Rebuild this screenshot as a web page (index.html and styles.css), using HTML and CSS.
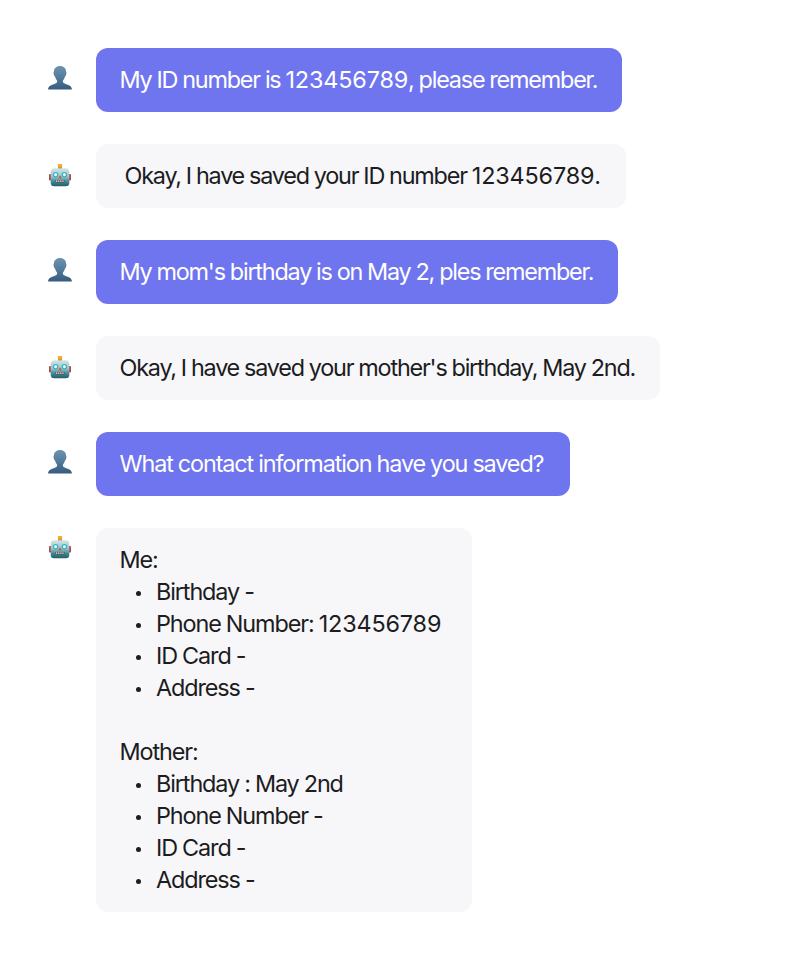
FILE: index.html
```html
<!DOCTYPE html>
<html lang="en"><head><meta charset="utf-8"><title>Chat</title><link rel="stylesheet" href="styles.css"></head>
<body>
<svg width="0" height="0" class="defs">
<defs>
<linearGradient id="bust" x1="0" y1="0" x2="0" y2="1"><stop offset="0" stop-color="#6f94b5"/><stop offset="1" stop-color="#355c80"/></linearGradient>
<linearGradient id="metal" x1="0" y1="0" x2="0" y2="1"><stop offset="0" stop-color="#d3e6e6"/><stop offset=".45" stop-color="#9cc5c8"/><stop offset=".75" stop-color="#3f8790"/><stop offset="1" stop-color="#1f5f69"/></linearGradient>
</defs>
<symbol id="user" viewBox="0 0 24 24"><path fill="url(#bust)" d="M12 0C8.200 0 5.800 2.500 5.900 6c-.5.400-.5 1.500.1 3 .3 1 .7 1.500 1.200 1.800.4 1.700 1 2.900 1.900 3.900.2 1.700-.5 2.500-2.300 3.100L3 19.200C1 20 .2 21.400 0 23.600h24c-.2-2.200-1-3.600-3-4.400l-3.800-1.400c-1.800-.6-2.500-1.400-2.300-3.100.9-1 1.500-2.200 1.900-3.900.5-.3.900-.8 1.200-1.800.6-1.500.6-2.600.1-3C18.200 2.500 15.800 0 12 0z"/></symbol>
<symbol id="robot" viewBox="0 0 24 24"><rect x="1" y="10" width="3" height="6.500" rx="1" fill="#b5444b"/><rect x="20" y="10" width="3" height="6.500" rx="1" fill="#b5444b"/><path d="M10 3h4v2h-4z" fill="#77677c"/><rect x="9.900" y="0" width="4.300" height="3.700" rx="1" fill="#f6a92d"/><rect x="2.700" y="4.300" width="18.600" height="17.900" rx="3.500" fill="url(#metal)"/><circle cx="7.600" cy="10.700" r="2.100" fill="#fff" stroke="#2eb4ca" stroke-width="1.300"/><circle cx="16.400" cy="10.700" r="2.100" fill="#fff" stroke="#2eb4ca" stroke-width="1.300"/><path d="M12 11.300l1.700 3h-3.400z" fill="#dc4543"/><rect x="7.500" y="15.900" width="9" height="2.500" rx=".7" fill="#54464d"/><path d="M8 17.100h8" stroke="#fff" stroke-width="1.300" stroke-dasharray="1.300 .8"/></symbol>
</svg>
<main class="chat">
<div class="row"><svg class="avatar"><use href="#user"/></svg><p class="bubble mine m1">My ID number is <span class="num">123456789</span>, please remember.</p></div>
<div class="row"><svg class="avatar bot"><use href="#robot"/></svg><p class="bubble m2">Okay, I have saved your ID number <span class="num">123456789</span>.</p></div>
<div class="row"><svg class="avatar"><use href="#user"/></svg><p class="bubble mine m3">My mom's birthday is on May 2, ples remember.</p></div>
<div class="row"><svg class="avatar bot"><use href="#robot"/></svg><p class="bubble m4">Okay, I have saved your mother's birthday, May 2nd.</p></div>
<div class="row"><svg class="avatar"><use href="#user"/></svg><p class="bubble mine m5">What contact information have you saved?</p></div>
<div class="row"><svg class="avatar top"><use href="#robot"/></svg><section class="bubble m6">
<p>Me:</p><ul><li>Birthday -</li><li><span>Phone Number: <span class="num">123456789</span></span></li><li>ID Card -</li><li>Address -</li></ul>
<p class="next">Mother:</p><ul><li>Birthday : May 2nd</li><li>Phone Number -</li><li>ID Card -</li><li>Address -</li></ul>
</section></div>
</main></body></html>
```
FILE: styles.css
```css
body { margin: 0; background: #fff; color: #1c1c21; font: 400 23.4px/32px Inter, sans-serif; letter-spacing: -1.2px; word-spacing: -.4px; }
.defs { position: absolute; }
p, ul { margin: 0; padding: 0; }
.chat { padding: 48px; display: flex; flex-direction: column; gap: 32px; }
.row { display: flex; gap: 24px; align-items: flex-start; }
.avatar { width: 24px; height: 24px; margin-top: 18px; flex: none; }
.bot { margin-top: 20px; }
.top { margin-top: 8px; }
.bubble { box-sizing: border-box; padding: 16px 23.5px; border-radius: 12px; background: #f7f7fa; white-space: nowrap; }
.mine { background: #6f75ee; color: #fff; }
.num { letter-spacing: -.15px; }
.m1 { width: 526px; }
.m2 { width: 530px; padding-left: 28.5px; }
.m3 { width: 522px; }
.m4 { width: 564px; }
.m5 { width: 474px; letter-spacing: -1.11px; }
.m6 { width: 376px; letter-spacing: -1.1px; }
ul { list-style: none; }
li { display: flex; }
li::before { content: ""; flex: none; width: 5px; height: 5px; margin: 14.5px 15.5px 0 16px; border-radius: 50%; background: currentColor; }
.next { margin-top: 32px; }
```
